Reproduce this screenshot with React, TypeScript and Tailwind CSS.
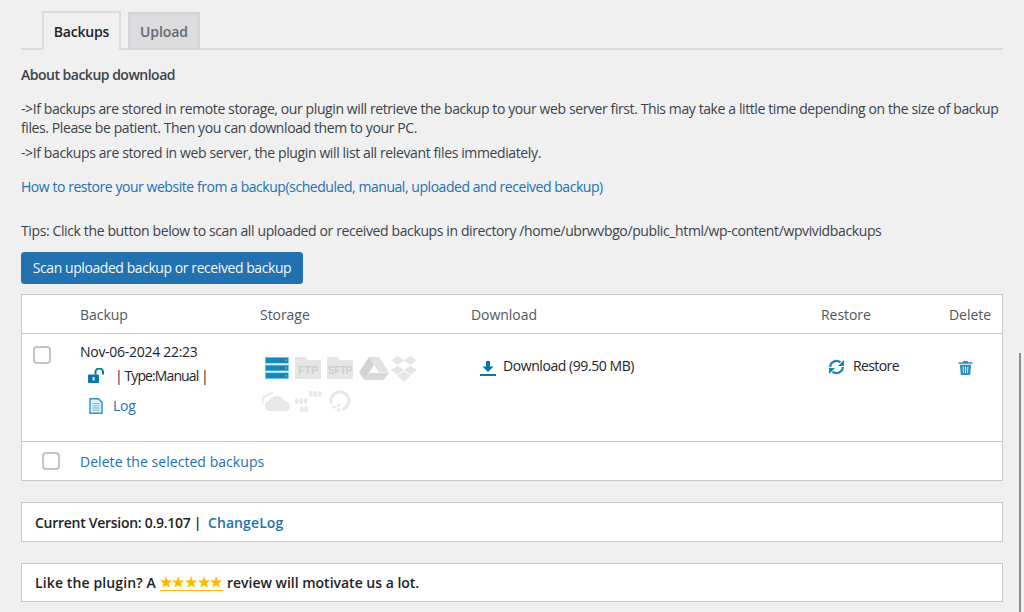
import React from "react";

const Server = () => (
  <svg width="24" height="22" viewBox="0 0 24 22">
    {[0, 7.7, 15.400].map((y) => (
      <g key={y}>
        <rect x="0.4" y={y + 0.4} width="23" height="5.800" fill="#0b8dc4" stroke="#6cc0e4" strokeWidth="0.6" />
        <rect x="13" y={y + 2.500} width="6" height="1.600" fill="#4f6f80" />
        <rect x="20" y={y + 2.500} width="2" height="1.600" fill="#86a0a0" />
      </g>
    ))}
  </svg>
);

const Folder = ({ label, w }: { label: string; w: number }) => (
  <svg width="26" height="22" viewBox="0 0 26 22">
    <path d="M0 0h10l3 3h13v19H0z" fill="#e6e6e6" />
    <text x="13" y="16.500" textAnchor="middle" fontSize={w} fontWeight="700" fill="#cfcfcf" fontFamily="Liberation Sans, sans-serif">{label}</text>
  </svg>
);

const Drive = () => (
  <svg width="30" height="23" viewBox="0 0 30 23">
    <path d="M10 0h10l10 15.500H20z" fill="#e2e2e2" />
    <path d="M10 0l5 8L5.500 23 0 15.500z" fill="#d2d2d2" />
    <path d="M10.500 16h19.500L24.500 23H5.500z" fill="#d9d9d9" />
  </svg>
);

const Dropbox = () => (
  <svg width="28" height="26" viewBox="0 0 28 26">
    <g fill="#e6e6e6">
      <path d="M7.500 0L14 4.500 7.500 9 1 4.500z" />
      <path d="M20.500 0L27 4.500 20.500 9 14 4.500z" />
      <path d="M7.500 9.500L14 14 7.500 18.500 1 14z" />
      <path d="M20.500 9.500L27 14 20.500 18.500 14 14z" />
      <path d="M14 15.500l6.500 4L14 26l-7-6.500z" />
    </g>
  </svg>
);

const Cloud = () => (
  <svg width="29" height="19" viewBox="0 0 29 19">
    <path d="M8 19a5 5 0 0 1-1-9.900A7 7 0 0 1 15 4.500 7.500 7.500 0 0 1 23.500 9.500 4.800 4.800 0 0 1 24 19z" fill="#e8e8e8" />
    <path d="M1 12A6 6 0 0 1 4.500 3.500 6 6 0 0 1 11 1.500" stroke="#e8e8e8" strokeWidth="2" fill="none" />
  </svg>
);

const Nodes = () => (
  <svg width="27" height="22" viewBox="0 0 27 22" fill="#e8e8e8">
    <rect x="14" y="1" width="3.500" height="6" rx="1.700" />
    <rect x="18.500" y="1" width="3.500" height="6" rx="1.700" />
    <rect x="23" y="1" width="3.500" height="6" rx="1.700" />
    <rect x="0" y="8" width="3.500" height="6" rx="1.700" />
    <rect x="4.500" y="8" width="3.500" height="6" rx="1.700" />
    <rect x="9" y="8" width="3.500" height="6" rx="1.700" />
    <rect x="5" y="16" width="3.500" height="6" rx="1.700" />
    <rect x="9.500" y="16" width="3.500" height="6" rx="1.700" />
  </svg>
);

const Ring = () => (
  <svg width="24" height="22" viewBox="0 0 24 22">
    <path d="M3.500 14A9 9 0 1 1 14 19.500" fill="none" stroke="#e8e8e8" strokeWidth="3" />
    <rect x="9" y="14" width="3" height="3" fill="#e8e8e8" />
    <rect x="4.500" y="15.500" width="3" height="3" fill="#e8e8e8" />
    <rect x="9" y="18.500" width="3" height="3" fill="#e8e8e8" />
  </svg>
);

const Lock = () => (
  <svg width="17" height="15" viewBox="0 0 17 15">
    <rect x="0" y="6.500" width="11" height="8.500" rx="1" fill="#0a77a6" />
    <rect x="4.700" y="9" width="1.800" height="3.500" fill="#f0f8fb" />
    <path d="M7.500 6.500V4a3.500 3.200 0 0 1 7.500 0v2.500" fill="none" stroke="#0a77a6" strokeWidth="2" />
  </svg>
);

const Doc = () => (
  <svg width="14" height="16" viewBox="0 0 14 16">
    <path d="M1 .8h8.500L13 4.300V15.200H1z" fill="#dff1f8" stroke="#2b93bd" strokeWidth="1.400" />
    <path d="M3.500 5.500h7M3.500 7.800h7M3.500 10h7M3.500 12.300h7" stroke="#6fb7d3" strokeWidth="1" />
  </svg>
);

const DownloadIcon = () => (
  <svg width="16" height="15" viewBox="0 0 16 15">
    <path d="M6 0h4v5.500h3.500L8 11 2.500 5.500H6z" fill="#0a77a6" />
    <rect x="0" y="13" width="16" height="2" fill="#0a77a6" />
  </svg>
);

const RestoreIcon = () => (
  <svg width="17" height="16" viewBox="0 0 17 16">
    <path d="M2.200 8a6.300 6.300 0 0 1 10.300-4.600" fill="none" stroke="#1583b3" strokeWidth="2.200" />
    <path d="M16 1v6h-6z" fill="#1583b3" />
    <path d="M14.800 8a6.300 6.300 0 0 1-10.300 4.600" fill="none" stroke="#1583b3" strokeWidth="2.200" />
    <path d="M1 15V9h6z" fill="#1583b3" />
  </svg>
);

const Trash = () => (
  <svg width="15" height="15" viewBox="0 0 15 16">
    <path d="M0 2.500h15v1.500H0zM5 1h5v2H5z" fill="#2b8dba" />
    <path d="M1.500 5h12l-1 11h-10z" fill="#2b8dba" />
    <path d="M5 7l.3 7M7.500 7v7M10 7l-.3 7" stroke="#e6f3f8" strokeWidth="1" />
  </svg>
);

const Box = () => <span className="block h-[18px] w-[18px] rounded-[4px] border-2 border-[#c4c4c4] bg-white" />;

export default function App() {
  return (
    <div className="relative h-[612px] w-[1024px] overflow-hidden bg-[#f0f0f1] px-[21px] text-[14px] leading-[21px] tracking-[-0.28px] text-[#3c434a] [font-family:'Open_Sans','Noto_Sans',sans-serif]">
      <div className="flex h-[50px] items-end gap-[7px] border-b-2 border-[#dcdcde] pl-[21px] pt-3">
        <div className="-mb-[2px] flex h-[39px] w-[79px] items-center justify-center border-2 border-b-0 border-[#dcdcde] bg-[#f0f0f1] font-semibold tracking-[-0.2px] text-[#1d2327]">Backups</div>
        <div className="-mb-[2px] flex h-[38px] w-[72px] items-center justify-center border-2 border-[#d5d5d5] bg-[#dcdcde] font-semibold tracking-[-0.05px] text-[#646970]">Upload</div>
      </div>

      <p className="mt-[14px] font-semibold tracking-[-0.5px]">About backup download</p>
      <p className="mt-[14px] w-[985px] leading-[19px] tracking-[-0.4px]">-&gt;If backups are stored in remote storage, our plugin will retrieve the backup to your web server first. This may take a little time depending on the size of backup files. Please be patient. Then you can download them to your PC.</p>
      <p className="mt-[5px] tracking-[-0.38px]">-&gt;If backups are stored in web server, the plugin will list all relevant files immediately.</p>
      <p className="mt-[13px] tracking-[-0.45px] text-[#2271b1]">How to restore your website from a backup(scheduled, manual, uploaded and received backup)</p>
      <p className="mt-[23px] tracking-[-0.38px]">Tips: Click the button below to scan all uploaded or received backups in directory /home/ubrwvbgo/public_html/wp-content/wpvividbackups</p>

      <button className="mt-[11px] block h-[32px] w-[282px] rounded-[3px] border border-[#2271b1] bg-[#2271b1] pb-[2px] text-center tracking-[-0.43px] text-[#f6f7f7]">Scan uploaded backup or received backup</button>

      <div className="mt-[10px] w-[982px] border border-[#c9c9c9] bg-white">
        <div className="flex h-[39px] items-center border-b border-[#c9c9c9] tracking-[-0.05px] text-[#50575e]">
          <span className="ml-[58px] w-[180px]">Backup</span>
          <span className="w-[211px]">Storage</span>
          <span className="w-[350px]">Download</span>
          <span className="w-[128px]">Restore</span>
          <span>Delete</span>
        </div>
        <div className="flex h-[108px] border-b border-[#c9c9c9] text-[#1d2327]">
          <div className="ml-[11px] mt-[12px] w-[47px]"><Box /></div>
          <div className="w-[180px] pt-[7px]">
            <div>Nov-06-2024 22:23</div>
            <div className="ml-[8px] mt-[3px] flex items-center gap-[10px] tracking-[-0.9px]"><Lock /><span>| Type:Manual |</span></div>
            <div className="ml-[9px] mt-[9px] flex items-center gap-[10px] text-[#2271b1]"><Doc /><span>Log</span></div>
          </div>
          <div className="w-[211px] pl-[5px] pt-[23px]">
            <div className="flex h-[33px] items-start gap-[6px]">
              <Server /><Folder label="FTP" w={11} /><Folder label="SFTP" w={10} />
              <Drive /><div className="-ml-[5px] -mt-[1px]"><Dropbox /></div>
            </div>
            <div className="-ml-[3px] flex items-center gap-[4px]"><Cloud /><Nodes /><div className="ml-[2px]"><Ring /></div></div>
          </div>
          <div className="flex w-[350px] items-start gap-[7px] pl-[9px] pt-[27px]"><DownloadIcon /><span className="-mt-[6px] tracking-[-0.43px]">Download (99.50 MB)</span></div>
          <div className="flex w-[128px] items-start gap-[8px] pl-[7px] pt-[25px]"><RestoreIcon /><span className="-mt-[4px] tracking-[-0.6px]">Restore</span></div>
          <div className="pl-[9px] pt-[26px]"><Trash /></div>
        </div>
        <div className="flex h-[38px] items-center">
          <span className="ml-[20px] w-[38px]"><Box /></span>
          <span className="tracking-[0.05px] text-[#2271b1]">Delete the selected backups</span>
        </div>
      </div>

      <div className="mt-[21px] flex h-[40px] w-[982px] items-center border border-[#c9c9c9] bg-white pl-[13px] font-semibold text-[#1d2327]">
        Current Version: 0.9.107 |&nbsp;&nbsp;<span className="tracking-[0.1px] text-[#2271b1]">ChangeLog</span>
      </div>
      <div className="mt-[21px] flex h-[39px] w-[982px] items-center border border-[#c9c9c9] bg-white pl-[13px] font-semibold tracking-[0.12px] text-[#1d2327]">
        Like the plugin? A&nbsp;<span className="border-b border-[#ffb900] leading-[16px] tracking-[-0.28px] text-[#ffb900]">★★★★★</span>&nbsp;<span className="tracking-[-0.01px]">review will motivate us a lot.</span>
      </div>

      <div className="absolute right-[3px] top-[353px] h-[259px] w-[2px] bg-[#8c8c8c]" />
    </div>
  );
}
